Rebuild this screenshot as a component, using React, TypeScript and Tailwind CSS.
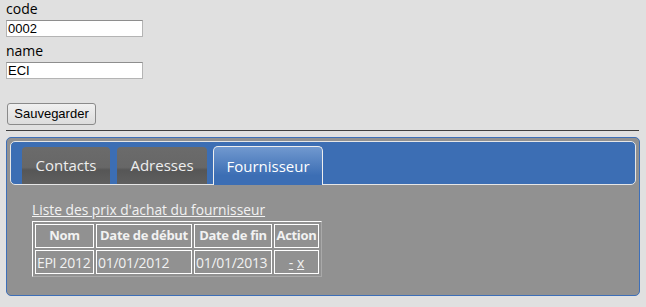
import React from "react";

const tabs = [
  { label: "Contacts", width: "w-[88px] mr-[1px]", active: false },
  { label: "Adresses", width: "w-[90px]", active: false },
  { label: "Fournisseur", width: "w-[110px]", active: true },
];

const rows = [{ nom: "EPI 2012", debut: "01/01/2012", fin: "01/01/2013" }];

export default function App() {
  return (
    <div className="h-[307px] w-full bg-[#e0e0e0] font-['Open_Sans',sans-serif] text-[14px] text-black">
      {/* FORM */}
      <div className="px-[6px]">
        <div className="h-[20px] leading-[18px]">code</div>
        <input
          defaultValue="0002"
          className="block h-[17px] w-[137px] border border-[#b4b4b4] border-t-[#8e8e8e] bg-white px-[1px] font-['Liberation_Sans',Arial,sans-serif] text-[13px] leading-[15px] outline-none"
        />
        <div className="mt-[5px] h-[20px] leading-[18px]">name</div>
        <input
          defaultValue="ECI"
          className="block h-[17px] w-[137px] border border-[#b4b4b4] border-t-[#8e8e8e] bg-white px-[1px] font-['Liberation_Sans',Arial,sans-serif] text-[13px] leading-[15px] outline-none"
        />
        <button className="ml-[1px] mt-[24px] block h-[22px] w-[89px] rounded-[3px] border border-[#8a8a8a] bg-[linear-gradient(#f0f0f0,#dcdcdc)] font-['Liberation_Sans',Arial,sans-serif] text-[13px] leading-[20px]">
          Sauvegarder
        </button>
        <div className="mt-[5px] h-px w-[633px] bg-[#3e3e3e]" />
      </div>

      {/* TABS */}
      <div className="mx-[6px] mt-[6px] h-[159px] rounded-[5px] border border-[#3d6fb8] bg-[#919191] p-[3px]">
        <div className="flex h-[44px] items-end gap-[6px] rounded-[5px] border border-[#e6e6e6] bg-[#3c6eb4] pl-[11px]">
          {tabs.map((t) =>
            t.active ? (
              <div
                key={t.label}
                className={`${t.width} -mb-px flex h-[39px] items-center justify-center rounded-t-[5px] border border-b-0 border-[#eeeeee] bg-[linear-gradient(#7199cf,#3c6eb4_75%)] text-[15px] text-white`}
              >
                {t.label}
              </div>
            ) : (
              <div
                key={t.label}
                className={`${t.width} flex h-[37px] items-center justify-center rounded-t-[4px] bg-[linear-gradient(#6b6b6b,#676767_55%,#565656_62%,#5f5f5f)] text-[15px] text-[#eeeeee]`}
              >
                {t.label}
              </div>
            ),
          )}
        </div>

        <div className="px-[22px] pt-[15px] text-[#f2f2f2]">
          <a className="block h-[21px] w-fit text-[13.8px] leading-[20px] underline">
            Liste des prix d'achat du fournisseur
          </a>
          <table className="border-separate border-spacing-[2px] border border-white border-b-[#a9a9a9] border-r-[#a9a9a9] text-[14px] whitespace-nowrap">
            <thead>
              <tr className="h-[24px]">
                <th className="w-[59px] border border-white p-0 text-center text-[13px] font-bold tracking-[-0.3px]">Nom</th>
                <th className="w-[96px] border border-white p-0 text-center text-[13px] font-bold tracking-[-0.3px]">Date de début</th>
                <th className="w-[78px] border border-white p-0 text-center text-[13px] font-bold tracking-[-0.3px]">Date de fin</th>
                <th className="w-[45px] border border-white p-0 text-center text-[13px] font-bold tracking-[-0.3px]">Action</th>
              </tr>
            </thead>
            <tbody>
              {rows.map((r) => (
                <tr key={r.nom} className="h-[24px]">
                  <td className="border border-white px-px tracking-[-0.3px]">{r.nom}</td>
                  <td className="border border-white px-px tracking-[-0.3px]">{r.debut}</td>
                  <td className="border border-white px-px tracking-[-0.3px]">{r.fin}</td>
                  <td className="border border-white px-px text-center">
                    <a className="underline">-</a> <a className="underline">x</a>
                  </td>
                </tr>
              ))}
            </tbody>
          </table>
        </div>
      </div>
    </div>
  );
}
